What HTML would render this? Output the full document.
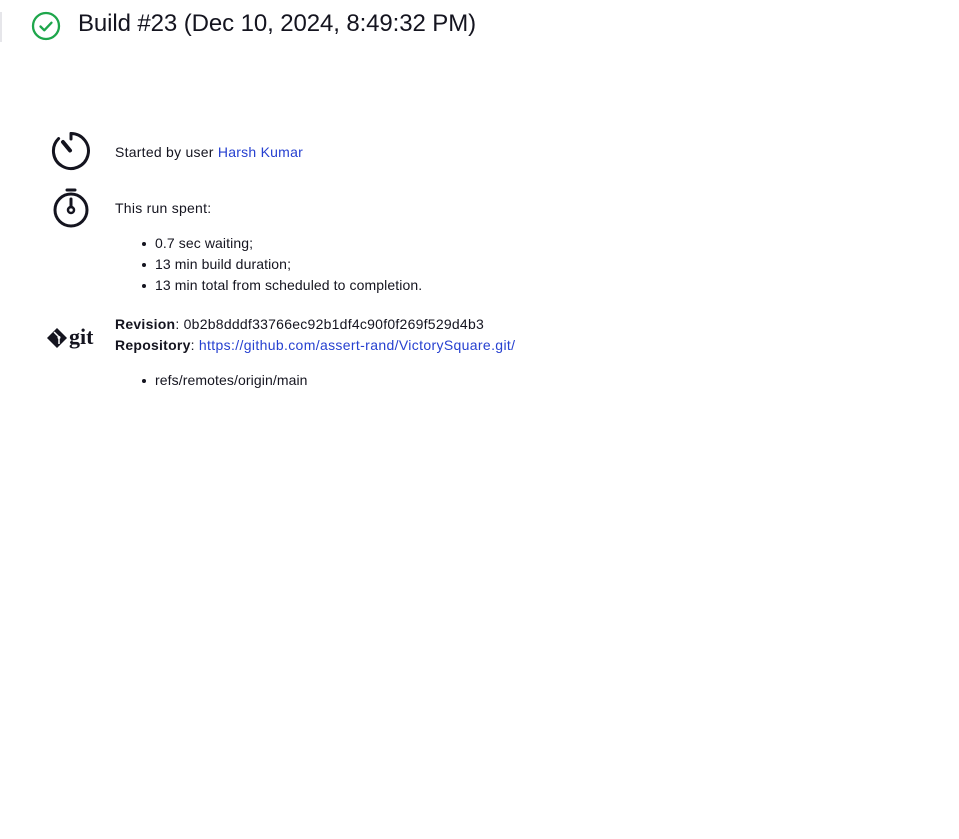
<!DOCTYPE html>
<html><head><meta charset="utf-8"><style>
body{margin:0;width:959px;height:839px;background:#fff;font-family:"Liberation Sans",sans-serif;color:#14141f;position:relative;overflow:hidden}
.a{position:absolute;white-space:nowrap}
.t{font-size:14px;line-height:20px;letter-spacing:0.25px}
a{color:#2640d0;text-decoration:none}
ul{margin:0;padding:0;list-style:none}
li{position:relative;font-size:14px;line-height:21px;letter-spacing:0.1px}
li:before{content:"";position:absolute;left:-13px;top:9px;width:4px;height:4px;border-radius:50%;background:#14141f}
</style></head><body>
<div class="a" style="left:0;top:12px;width:2px;height:30px;background:#e6e6ea"></div>
<svg class="a" style="left:31px;top:11px" width="30" height="30" viewBox="0 0 30 30"><circle cx="15" cy="15" r="13" fill="none" stroke="#1ea64b" stroke-width="2.3"/><path d="M9.5 15.5l3.8 3.8 7.2-7.6" fill="none" stroke="#1ea64b" stroke-width="2.3" stroke-linecap="round" stroke-linejoin="round"/></svg>
<div class="a" style="left:78px;top:9px;font-size:24px;line-height:30px;color:#14141f;letter-spacing:-0.1px">Build #23 (Dec 10, 2024, 8:49:32 PM)</div>

<svg class="a" style="left:50px;top:130px" width="42" height="42" viewBox="0 0 42 42"><path d="M21 3.5A17.5 17.5 0 1 1 8.6 8.6" fill="none" stroke="#14141f" stroke-width="3" stroke-linecap="round"/><path d="M21 3.5V9" stroke="#14141f" stroke-width="3" stroke-linecap="round"/><path d="M13 12L20 20.5" stroke="#14141f" stroke-width="4" stroke-linecap="round"/></svg>
<div class="a t" style="left:115px;top:142px">Started by user <a>Harsh Kumar</a></div>

<svg class="a" style="left:50px;top:186px" width="42" height="44" viewBox="0 0 42 44"><circle cx="21" cy="24" r="16" fill="none" stroke="#14141f" stroke-width="3"/><path d="M17 4h8" stroke="#14141f" stroke-width="3" stroke-linecap="round"/><path d="M21 13v8" stroke="#14141f" stroke-width="3" stroke-linecap="round"/><circle cx="21" cy="24" r="3" fill="none" stroke="#14141f" stroke-width="2.5"/></svg>
<div class="a t" style="left:115px;top:198px">This run spent:</div>
<ul class="a" style="left:155px;top:233px">
<li>0.7 sec waiting;</li><li>13 min build duration;</li><li>13 min total from scheduled to completion.</li></ul>

<svg class="a" style="left:46px;top:327px" width="22" height="22" viewBox="0 0 22 22"><path d="M11 1L21 11 11 21 1 11Z" fill="#14141f"/><path d="M8 5l5 5" stroke="#fff" stroke-width="1.5"/><circle cx="13" cy="10.5" r="1.5" fill="#fff"/><path d="M13 11v6" stroke="#fff" stroke-width="1.5"/></svg>
<div class="a" style="left:69px;top:324px;font-family:'Liberation Serif',serif;font-weight:bold;font-size:22px;line-height:26px;color:#14141f">git</div>
<div class="a t" style="left:115px;top:314px"><b>Revision</b>: 0b2b8dddf33766ec92b1df4c90f0f269f529d4b3</div>
<div class="a t" style="left:115px;top:335px"><b>Repository</b>: <a style="letter-spacing:0.35px">https://github.com/assert-rand/VictorySquare.git/</a></div>
<ul class="a" style="left:155px;top:370px"><li>refs/remotes/origin/main</li></ul>
</body></html>
